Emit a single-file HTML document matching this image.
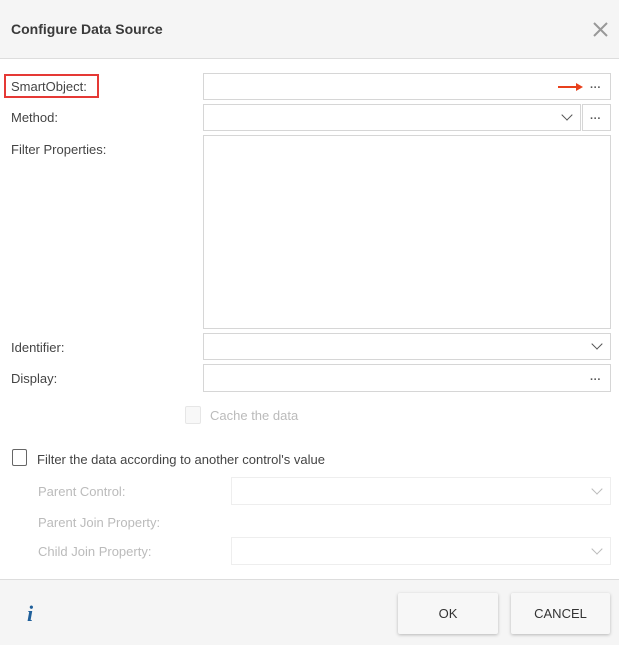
<!DOCTYPE html><html><head><style>
body{margin:0;width:619px;height:644px;position:relative;font-family:"Liberation Sans",sans-serif;font-size:13px;color:#333;background:#fff;overflow:hidden}
.a{position:absolute}
.in{position:absolute;border:1px solid #d6d6d6;background:#fff;box-sizing:border-box}
.lbl{position:absolute;left:11px;font-size:13px;color:#444}
.dis{color:#bbb}
.chev{position:absolute;width:7px;height:7px;border-right:1.6px solid #555;border-bottom:1.6px solid #555;transform:rotate(45deg)}
.dots{position:absolute;font-size:11px;font-weight:bold;color:#555}
.btn{position:absolute;top:593px;height:41px;background:#f7f7f7;box-shadow:0 1px 3px rgba(0,0,0,.25);font-size:13px;color:#333;text-align:center;line-height:41px;border-radius:2px}
</style></head><body>
<div class="a" style="left:0;top:0;width:619px;height:58px;background:#f5f5f5;border-bottom:1px solid #ddd"></div>
<div class="a" style="left:11px;top:21px;font-size:14px;font-weight:bold;color:#3a3a3a">Configure Data Source</div>
<svg class="a" style="left:593px;top:22px" width="15" height="15"><path d="M1 1L14 14M14 1L1 14" stroke="#999" stroke-width="2"/></svg>

<div class="a" style="left:4px;top:74px;width:91px;height:20px;border:2px solid #e53935"></div>
<div class="lbl" style="top:79px">SmartObject:</div>
<div class="in" style="left:203px;top:73px;width:408px;height:27px"></div>
<svg class="a" style="left:558px;top:83px" width="26" height="8"><path d="M0 4H19" stroke="#e8401c" stroke-width="2"/><path d="M18 0L25 4L18 8Z" fill="#e8401c"/></svg>
<div class="dots" style="left:590px;top:82px">···</div>

<div class="lbl" style="top:110px">Method:</div>
<div class="in" style="left:203px;top:104px;width:378px;height:27px"></div>
<div class="chev" style="left:563px;top:111px"></div>
<div class="in" style="left:582px;top:104px;width:29px;height:27px"></div>
<div class="dots" style="left:590px;top:113px">···</div>

<div class="lbl" style="top:142px">Filter Properties:</div>
<div class="in" style="left:203px;top:135px;width:408px;height:194px"></div>

<div class="lbl" style="top:340px">Identifier:</div>
<div class="in" style="left:203px;top:333px;width:408px;height:27px"></div>
<div class="chev" style="left:593px;top:340px"></div>

<div class="lbl" style="top:371px">Display:</div>
<div class="in" style="left:203px;top:364px;width:408px;height:28px"></div>
<div class="dots" style="left:590px;top:374px">···</div>

<div class="a" style="left:185px;top:406px;width:14px;height:16px;border:1px solid #e6e6e6;border-radius:2px;background:#f8f8f8"></div>
<div class="a dis" style="left:210px;top:408px;color:#bbb">Cache the data</div>

<div class="a" style="left:12px;top:449px;width:13px;height:15px;border:1.5px solid #666;border-radius:2px"></div>
<div class="a" style="left:37px;top:452px;color:#444">Filter the data according to another control's value</div>

<div class="a" style="left:38px;top:484px;color:#bbb">Parent Control:</div>
<div class="in" style="left:231px;top:477px;width:380px;height:28px;border-color:#eee"></div>
<div class="chev" style="left:593px;top:485px;border-color:#bbb"></div>
<div class="a" style="left:38px;top:515px;color:#bbb">Parent Join Property:</div>
<div class="a" style="left:38px;top:544px;color:#bbb">Child Join Property:</div>
<div class="in" style="left:231px;top:537px;width:380px;height:28px;border-color:#eee"></div>
<div class="chev" style="left:593px;top:545px;border-color:#bbb"></div>

<div class="a" style="left:0;top:579px;width:619px;height:65px;background:#f5f5f5;border-top:1px solid #ddd"></div>
<div class="a" style="left:27px;top:601px;font-family:'Liberation Serif',serif;font-style:italic;font-weight:bold;font-size:22px;color:#1f5f9a">i</div>
<div class="btn" style="left:398px;width:100px">OK</div>
<div class="btn" style="left:511px;width:99px">CANCEL</div>
</body></html>
